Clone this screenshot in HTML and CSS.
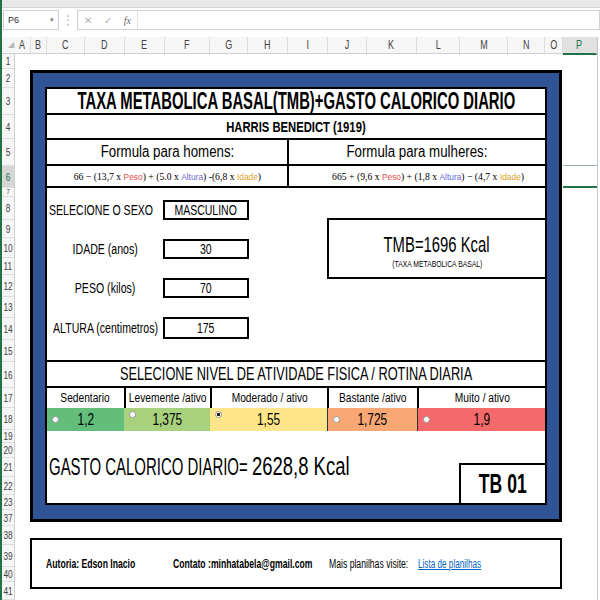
FILE: index.html
```html
<!DOCTYPE html>
<html lang="pt">
<head>
<meta charset="utf-8">
<title>TMB</title>
<link rel="stylesheet" href="styles.css">
</head>
<body>
<div class="app">
  <div class="topstrip"></div>
  <div class="fbar">
    <div class="namebox"><span class="nb-text">P6</span><span class="nb-arrow">&#9662;</span></div>
    <div class="fsep">&#8942;</div>
    <div class="fbtns"><span>&#10005;</span><span>&#10003;</span><span class="fx">fx</span></div>
    <div class="finput"></div>
  </div>
  <div class="colhdr">
    <div class="ch corner">&#9698;</div>
    <div class="ch"><span class="sx">A</span></div><div class="ch"><span class="sx">B</span></div>
    <div class="ch"><span class="sx">C</span></div><div class="ch"><span class="sx">D</span></div>
    <div class="ch"><span class="sx">E</span></div><div class="ch"><span class="sx">F</span></div>
    <div class="ch"><span class="sx">G</span></div><div class="ch"><span class="sx">H</span></div>
    <div class="ch"><span class="sx">I</span></div><div class="ch"><span class="sx">J</span></div>
    <div class="ch"><span class="sx">K</span></div><div class="ch"><span class="sx">L</span></div>
    <div class="ch"><span class="sx">M</span></div><div class="ch"><span class="sx">N</span></div>
    <div class="ch"><span class="sx">O</span></div><div class="ch sel"><span class="sx">P</span></div>
    <div class="ch end"></div>
  </div>
  <div class="sheet">
    <div class="rowhdr">
      <div class="rh h15"><span class="sx">1</span></div><div class="rh h19"><span class="sx">2</span></div>
      <div class="rh h27"><span class="sx">3</span></div><div class="rh h24"><span class="sx">4</span></div>
      <div class="rh h27"><span class="sx">5</span></div><div class="rh h22 sel"><span class="sx">6</span></div>
      <div class="rh h9"><span class="sx">7</span></div><div class="rh h23"><span class="sx">8</span></div>
      <div class="rh h18"><span class="sx">9</span></div><div class="rh h20"><span class="sx">10</span></div>
      <div class="rh h17"><span class="sx">11</span></div><div class="rh h22"><span class="sx">12</span></div>
      <div class="rh h21"><span class="sx">13</span></div><div class="rh h22"><span class="sx">14</span></div>
      <div class="rh h22"><span class="sx">15</span></div><div class="rh h26"><span class="sx">16</span></div>
      <div class="rh h20"><span class="sx">17</span></div><div class="rh h22"><span class="sx">18</span></div>
      <div class="rh h13"><span class="sx">19</span></div><div class="rh h15"><span class="sx">20</span></div>
      <div class="rh h19"><span class="sx">21</span></div><div class="rh h18"><span class="sx">22</span></div>
      <div class="rh h15"><span class="sx">23</span></div><div class="rh h16"><span class="sx">37</span></div>
      <div class="rh h19"><span class="sx">38</span></div><div class="rh h22"><span class="sx">39</span></div>
      <div class="rh h15"><span class="sx">40</span></div><div class="rh h18"><span class="sx">41</span></div>
    </div>
    <div class="canvas">
      <div class="frame">
        <div class="panel">
          <div class="title cen"><span class="sx">TAXA METABOLICA BASAL(TMB)+GASTO CALORICO DIARIO</span></div>
          <div class="subtitle cen"><span class="sx">HARRIS BENEDICT (1919)</span></div>
          <div class="names">
            <div class="name-cell cen left"><span class="sx">Formula para homens:</span></div>
            <div class="name-cell cen"><span class="sx">Formula para mulheres:</span></div>
          </div>
          <div class="eqs">
            <div class="eq-cell cen left"><span class="sx">66 &minus; (13,7 x <span class="w peso">Peso</span>) + (5.0 x <span class="w alt">Altura</span>) -(6,8 x <span class="w ida">Idade</span>)</span></div>
            <div class="eq-cell cen right"><span class="sx">665 + (9,6 x <span class="w peso">Peso</span>) + (1,8 x <span class="w alt">Altura</span>) &minus; (4,7 x <span class="w ida">Idade</span>)</span></div>
          </div>
          <div class="body">
            <div class="inputs">
              <div class="irow"><div class="ilabel first"><span class="sx">SELECIONE O SEXO</span></div><div class="ibox cen"><span class="sx">MASCULINO</span></div></div>
              <div class="irow"><div class="ilabel cen"><span class="sx">IDADE (anos)</span></div><div class="ibox cen"><span class="sx">30</span></div></div>
              <div class="irow"><div class="ilabel cen"><span class="sx">PESO (kilos)</span></div><div class="ibox cen"><span class="sx">70</span></div></div>
              <div class="irow tall"><div class="ilabel cen"><span class="sx">ALTURA (centimetros)</span></div><div class="ibox cen"><span class="sx">175</span></div></div>
            </div>
            <div class="tmb-wrap">
              <div class="tmb">
                <div class="tmb-main cen"><span class="sx">TMB=1696 Kcal</span></div>
                <div class="tmb-sub cen"><span class="sx">(TAXA METABOLICA BASAL)</span></div>
              </div>
            </div>
          </div>
          <div class="act-title cen"><span class="sx">SELECIONE NIVEL DE ATIVIDADE FISICA / ROTINA DIARIA</span></div>
          <div class="act-labels">
            <div class="al cen"><span class="sx">Sedentario</span></div>
            <div class="al cen bl"><span class="sx">Levemente /ativo</span></div>
            <div class="al cen bl"><span class="sx">Moderado / ativo</span></div>
            <div class="al cen bl"><span class="sx">Bastante /ativo</span></div>
            <div class="al cen bl"><span class="sx">Muito / ativo</span></div>
          </div>
          <div class="act-vals">
            <div class="av cen g1"><span class="radio mid"></span><span class="sx">1,2</span></div>
            <div class="av cen g2"><span class="radio top"></span><span class="sx">1,375</span></div>
            <div class="av cen g3"><span class="radio top on"></span><span class="sx">1,55</span></div>
            <div class="av cen g4 bl"><span class="radio mid"></span><span class="sx">1,725</span></div>
            <div class="av cen g5 bl"><span class="radio mid"></span><span class="sx">1,9</span></div>
          </div>
          <div class="gasto">
            <div class="gasto-label"><span class="sx">GASTO CALORICO DIARIO=</span></div>
            <div class="gasto-num"><span class="sx">2628,8 Kcal</span></div>
            <div class="tb cen"><span class="sx">TB 01</span></div>
          </div>
        </div>
      </div>
      <div class="footer">
        <div class="f-author"><span class="sx">Autoria: Edson Inacio</span></div>
        <div class="f-contact"><span class="sx">Contato :minhatabela@gmail.com</span></div>
        <div class="f-more"><span class="sx">Mais planilhas visite:</span></div>
        <div class="f-link"><a class="sx" href="#">Lista de planilhas</a></div>
      </div>
    </div>
    <div class="colp"><div class="cellsel"></div></div>
    <div class="rightcol"></div>
  </div>
</div>
</body>
</html>
```
FILE: styles.css
```css
* { box-sizing: border-box; }
html, body { margin: 0; padding: 0; }
body {
  width: 600px;
  height: 600px;
  overflow: hidden;
  background: #ffffff;
  font-family: "Liberation Sans", Arial, sans-serif;
  color: #000;
}
.sx {
  display: block;
  white-space: nowrap;
  transform-origin: center;
  flex: none;
}
.cen {
  display: flex;
  justify-content: center;
  align-items: center;
}
.app {
  width: 600px;
  height: 600px;
  border-left: 2px solid #217346;
  display: flex;
  flex-direction: column;
}
.topstrip {
  height: 8px;
  background: #e8e8e8;
  border-bottom: 1px solid #d4d4d4;
}
.fbar {
  height: 29px;
  display: flex;
  align-items: flex-start;
  padding-top: 2px;
  background: #ffffff;
}
.namebox {
  width: 56px;
  height: 20px;
  margin-left: 1px;
  border: 1px solid #d0d0d0;
  display: flex;
  align-items: center;
  justify-content: space-between;
  padding: 0 4px;
  font-size: 9px;
  color: #333;
}
.nb-arrow { font-size: 7px; color: #777; }
.fsep {
  width: 18px;
  text-align: center;
  color: #b8b8b8;
  font-size: 12px;
  line-height: 20px;
}
.fbtns {
  width: 60px;
  height: 20px;
  border-top: 1px solid #d0d0d0;
  border-bottom: 1px solid #d0d0d0;
  border-left: 1px solid #d0d0d0;
  display: flex;
  align-items: center;
  justify-content: space-around;
  color: #b0b0b0;
  font-size: 10px;
}
.fbtns .fx { color: #666; font-style: italic; font-family: "Liberation Serif", serif; }
.finput {
  flex: 1;
  height: 20px;
  border: 1px solid #d0d0d0;
  border-left-color: #e0e0e0;
}
.colhdr {
  height: 17px;
  display: grid;
  grid-template-columns: 13px 16px 16px 38px 40px 40px 45px 38px 40px 40px 39px 50px 43px 48px 37px 18px 34px 1fr;
  background: #f6f6f6;
  border-bottom: 1px solid #d0d0d0;
}
.ch {
  font-size: 12px;
  color: #444;
  line-height: 16px;
  border-right: 1px solid #dcdcdc;
  display: flex;
  justify-content: center;
}
.ch .sx { transform: scaleX(.75); }
.ch.corner { color: #b8b8b8; font-size: 8px; justify-content: flex-end; padding-right: 1px; border-right: none; }
.ch.sel { background: #e1e1e1; border-bottom: 2px solid #217346; color: #217346; }
.ch.end { border-right: none; background: #fff; border-left: 1px solid #c8c8c8; }
.sheet {
  flex: 1;
  display: flex;
  overflow: hidden;
}
.rowhdr {
  width: 13px;
  flex: none;
  background: #f6f6f6;
  border-right: 1px solid #d0d0d0;
  display: flex;
  flex-direction: column;
}
.rh {
  font-size: 11px;
  color: #444;
  display: flex;
  align-items: center;
  justify-content: center;
  border-bottom: 1px solid #dedede;
  overflow: hidden;
}
.rh .sx { transform: scaleX(.75); }
.rh.sel { background: #d6d6d6; color: #217346; }
.h9 { height: 9px; font-size: 8px; line-height: 8px; }
.h13 { height: 13px; }
.h15 { height: 15px; }
.h16 { height: 16px; }
.h17 { height: 17px; }
.h18 { height: 18px; }
.h19 { height: 19px; }
.h20 { height: 20px; }
.h21 { height: 21px; }
.h22 { height: 22px; }
.h23 { height: 23px; }
.h24 { height: 24px; }
.h26 { height: 26px; }
.h27 { height: 27px; }
.canvas {
  width: 548px;
  flex: none;
  padding: 16px 0 0 15px;
}
.colp {
  width: 34px;
  flex: none;
  padding-top: 111px;
}
.cellsel {
  height: 23px;
  border-top: 1px solid #9bb7a4;
  border-bottom: 2px solid #217346;
}
.rightcol {
  flex: 1;
  border-left: 1px solid #c8c8c8;
  background: #fff;
}
.frame {
  width: 532px;
  height: 452px;
  border: 3px solid #000;
  background: #2f5597;
  padding: 14px 12px;
}
.panel {
  width: 502px;
  height: 418px;
  border: 2px solid #000;
  background: #fff;
  display: flex;
  flex-direction: column;
}
.title {
  height: 26px;
  border-bottom: 2px solid #000;
  font-weight: bold;
  font-size: 23px;
  line-height: 25px;
}
.title .sx { transform: scaleX(.645); }
.subtitle {
  height: 25px;
  border-bottom: 2px solid #000;
  font-weight: bold;
  font-size: 15px;
  line-height: 23px;
}
.subtitle .sx { transform: scaleX(.75); }
.names, .eqs {
  display: grid;
  grid-template-columns: 242px 1fr;
  border-bottom: 2px solid #000;
}
.names { height: 26px; }
.eqs { height: 22px; }
.name-cell {
  font-size: 16px;
  line-height: 24px;
}
.name-cell .sx { transform: scaleX(.83); }
.left { border-right: 2px solid #000; }
.eq-cell {
  font-family: "Liberation Serif", "Times New Roman", serif;
  font-size: 11px;
  line-height: 20px;
}
.eq-cell .sx { transform: scaleX(.88); }
.eq-cell.right { padding-left: 22px; }
.w { font-family: "Liberation Sans", Arial, sans-serif; font-size: 9.5px; }
.peso { color: #e8474a; }
.alt { color: #6868d6; }
.ida { color: #dd9f25; }
.body {
  height: 172px;
  display: grid;
  grid-template-columns: 280px 1fr;
}
.inputs {
  display: flex;
  flex-direction: column;
  gap: 19px;
  padding-top: 12px;
}
.irow {
  display: flex;
  align-items: center;
  height: 20px;
}
.irow.tall { height: 22px; }
.ilabel {
  width: 116px;
  font-size: 14px;
}
.ilabel .sx { transform: scaleX(.755); }
.ilabel.first { padding-left: 2px; }
.ilabel.first .sx { transform-origin: left center; }
.ibox {
  width: 86px;
  height: 100%;
  border: 2px solid #000;
  font-size: 14px;
}
.ibox .sx { transform: scaleX(.75); }
.tmb-wrap { padding-top: 30px; }
.tmb {
  height: 61px;
  border: 2px solid #000;
  border-right: none;
  display: flex;
  flex-direction: column;
  align-items: center;
  justify-content: center;
  padding-top: 6px;
}
.tmb-main { font-size: 22px; line-height: 24px; }
.tmb-main .sx { transform: scaleX(.675); }
.tmb-sub { font-size: 8.5px; line-height: 14px; }
.tmb-sub .sx { transform: scaleX(.8); }
.act-title {
  height: 28px;
  border-top: 2px solid #000;
  border-bottom: 2px solid #000;
  font-size: 18px;
  line-height: 25px;
}
.act-title .sx { transform: scaleX(.71); }
.act-labels, .act-vals {
  display: grid;
  grid-template-columns: 77px 86px 117px 90px 1fr;
}
.act-labels { height: 20px; }
.act-vals { height: 22px; }
.al {
  font-size: 12px;
  line-height: 20px;
}
.al .sx { transform: scaleX(.85); }
.al.bl { border-left: 2px solid #000; }
.av {
  position: relative;
  font-size: 17px;
  line-height: 23px;
}
.av .sx { transform: scaleX(.70); }
.av.bl { border-left: 1px solid #333; }
.g1 { background: #63be7b; }
.g2 { background: #a8d17e; }
.g3 { background: #ffe58a; }
.g4 { background: #f9a873; }
.g5 { background: #f46a6b; }
.radio {
  position: absolute;
  left: 5px;
  width: 7px;
  height: 7px;
  border-radius: 50%;
  background: #fff;
  border: 1px solid #999;
}
.radio.mid { top: 8px; }
.radio.top { top: 3px; }
.radio.on { background: radial-gradient(circle, #222 0 40%, #fff 50%); }
.gasto {
  flex: 1;
  display: flex;
  align-items: center;
}
.gasto-label {
  width: 205px;
  padding-left: 2px;
  padding-top: 2px;
  font-size: 23px;
}
.gasto-label .sx { transform: scaleX(.65); transform-origin: left center; }
.gasto-num {
  font-size: 26px;
  flex: 1;
}
.gasto-num .sx { transform: scaleX(.71); transform-origin: left center; }
.tb {
  align-self: flex-end;
  width: 86px;
  height: 40px;
  border-top: 2px solid #000;
  border-left: 2px solid #000;
  font-weight: bold;
  font-size: 27px;
  line-height: 40px;
}
.tb .sx { transform: scaleX(.65); }
.footer {
  margin-top: 16px;
  width: 532px;
  height: 51px;
  border: 2px solid #000;
  display: flex;
  align-items: center;
  padding-left: 14px;
  font-size: 12px;
}
.footer .sx { transform: scaleX(.72); transform-origin: left center; }
.f-author { font-weight: bold; width: 127px; }
.f-contact { font-weight: bold; width: 156px; }
.f-more { width: 89px; }
.f-link a { color: #0563c1; text-decoration: underline; }
.f-link .sx { transform: scaleX(.68); }
```
